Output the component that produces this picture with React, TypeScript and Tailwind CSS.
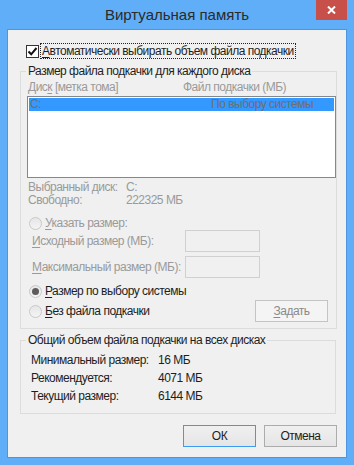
import type { ReactNode } from 'react';

function U({ children }: { children: ReactNode }) {
    return <span className="underline decoration-1 underline-offset-[2px]">{children}</span>;
}

function Radio({ checked }: { checked?: boolean }) {
    return (
        <span className="flex h-[13px] w-[13px] shrink-0 items-center justify-center rounded-full border border-[#c9c9c9] bg-gradient-to-b from-[#e6e6e6] to-[#f4f4f4]">
            {checked && <span className="h-[7px] w-[7px] rounded-full bg-[#5c5c5c]" />}
        </span>
    );
}

function Btn({ children, primary, disabled, className = '' }: { children: ReactNode; primary?: boolean; disabled?: boolean; className?: string }) {
    const border = primary ? 'border-[#3c9cf2]' : disabled ? 'border-[#c4c4c4]' : 'border-[#acacac]';
    const bg = disabled ? 'bg-[#f4f4f4]' : 'bg-gradient-to-b from-[#f0f0f0] to-[#e5e5e5]';
    const text = disabled ? 'text-[#8a8a8a]' : 'text-[#1e1e1e]';
    return (
        <div className={`flex h-[22px] w-[73px] shrink-0 items-center justify-center border ${border} ${bg} ${text} ${className}`}>
            {children}
        </div>
    );
}

export default function App() {
    return (
        <div className="h-[465px] w-[354px] whitespace-nowrap bg-[#60aef7] font-['Liberation_Sans',Arial,sans-serif] text-[12px] leading-[15px] tracking-[-0.5px] text-[#1e1e1e]">
            {/* Title bar */}
            <div className="flex h-[29px] items-start">
                <div className="w-[38px]" />
                <div className="flex-1 pt-[5px] text-center text-[15px] leading-[20px] tracking-normal text-[#2a2a2a]">Виртуальная память</div>
                <div className="mr-[7px] flex h-[20px] w-[31px] items-center justify-center bg-[#c7504a]">
                    <svg width="9" height="8" viewBox="0 0 9 8">
                        <path d="M1 0.5 L8 7.5 M8 0.5 L1 7.5" stroke="#fff" strokeWidth="2" />
                    </svg>
                </div>
            </div>

            {/* Client */}
            <div className="ml-[7px] h-[429px] w-[340px] border border-[#4d95dd] bg-[#f0f0f0]">
                <div className="flex items-center pl-[18px] pt-[13px]">
                    <span className="flex h-[13px] w-[13px] items-center justify-center border border-[#333] bg-white">
                        <svg width="11" height="11" viewBox="0 0 11 11">
                            <path d="M1.5 5.5 L4.2 8.3 L9.5 2" stroke="#111" strokeWidth="2" fill="none" />
                        </svg>
                    </span>
                    <span className="ml-[1px] border border-dotted border-[#222] px-[1px] leading-[14px]">
                        <U>А</U>втоматически выбирать объем файла подкачки
                    </span>
                </div>

                {/* Group 1 */}
                <fieldset className="ml-[12px] mt-[5px] h-[265px] w-[316px] border border-[#dcdcdc]">
                    <legend className="ml-[5px] px-[2px] leading-[15px]">Размер файла подкачки для каждого диска</legend>
                    <div className="mt-[1px] flex pl-[7px] text-[#9a9a9a]">
                        <span className="w-[155px]">Дис<U>к</U> [метка тома]</span>
                        <span>Файл подкачки (МБ)</span>
                    </div>
                    <div className="ml-[6px] mt-[1px] h-[82px] w-[309px] border border-[#828790] bg-white p-[1px]">
                        <div className="flex h-[13px] bg-[#3399ff] pl-[1px] leading-[13px] text-[#6f6f6f]">
                            <span className="w-[181px]">C:</span>
                            <span>По выбору системы</span>
                        </div>
                    </div>
                    <div className="mt-[3px] pl-[7px] leading-[13px] text-[#9a9a9a]">
                        <div className="flex"><span className="w-[98px]">Выбранный диск:</span><span>C:</span></div>
                        <div className="flex"><span className="w-[98px]">Свободно:</span><span>222325 МБ</span></div>
                    </div>
                    <div className="mt-[10px] flex h-[13px] items-center pl-[8px] text-[#9a9a9a]">
                        <Radio />
                        <span className="ml-[3px]"><U>У</U>казать размер:</span>
                    </div>
                    <div className="flex h-[22px] items-center pl-[11px] text-[#9a9a9a]">
                        <span className="w-[153px]"><U>И</U>сходный размер (МБ):</span>
                        <span className="h-[22px] w-[75px] border border-[#d0d0d0] bg-[#f0f0f0]" />
                    </div>
                    <div className="mt-[4px] flex h-[22px] items-center pl-[11px] text-[#9a9a9a]">
                        <span className="w-[153px]"><U>М</U>аксимальный размер (МБ):</span>
                        <span className="h-[22px] w-[75px] border border-[#d0d0d0] bg-[#f0f0f0]" />
                    </div>
                    <div className="mt-[6px] flex h-[14px] items-center pl-[8px]">
                        <Radio checked />
                        <span className="ml-[3px]"><U>Р</U>азмер по выбору системы</span>
                    </div>
                    <div className="mt-[2px] flex h-[22px] items-center pl-[8px]">
                        <Radio />
                        <span className="ml-[3px] flex-1"><U>Б</U>ез файла подкачки</span>
                        <Btn disabled className="mr-[8px]"><U>З</U>адать</Btn>
                    </div>
                </fieldset>

                {/* Group 2 */}
                <fieldset className="ml-[12px] mt-[4px] h-[81px] w-[316px] border border-[#dcdcdc]">
                    <legend className="ml-[5px] px-[2px] leading-[15px]">Общий объем файла подкачки на всех дисках</legend>
                    <div className="mt-[5px] flex flex-col gap-[4px] pl-[10px]">
                        <div className="flex h-[14px] items-center"><span className="w-[127px]">Минимальный размер:</span><span>16 МБ</span></div>
                        <div className="flex h-[14px] items-center"><span className="w-[127px]">Рекомендуется:</span><span>4071 МБ</span></div>
                        <div className="flex h-[14px] items-center"><span className="w-[127px]">Текущий размер:</span><span>6144 МБ</span></div>
                    </div>
                </fieldset>

                <div className="mt-[11px] flex justify-end gap-[8px] pr-[9px]">
                    <Btn primary>ОК</Btn>
                    <Btn>Отмена</Btn>
                </div>
            </div>
        </div>
    );
}
